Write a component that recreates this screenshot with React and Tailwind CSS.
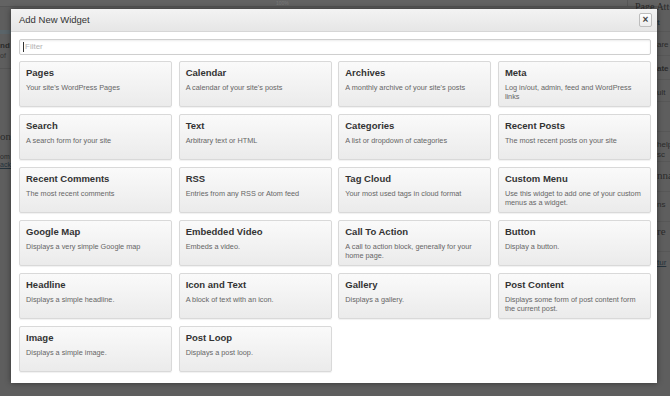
import React from "react";

const widgets = [
  { title: "Pages", desc: "Your site's WordPress Pages" },
  { title: "Calendar", desc: "A calendar of your site's posts" },
  { title: "Archives", desc: "A monthly archive of your site's posts" },
  { title: "Meta", desc: "Log in/out, admin, feed and WordPress links" },
  { title: "Search", desc: "A search form for your site" },
  { title: "Text", desc: "Arbitrary text or HTML" },
  { title: "Categories", desc: "A list or dropdown of categories" },
  { title: "Recent Posts", desc: "The most recent posts on your site" },
  { title: "Recent Comments", desc: "The most recent comments" },
  { title: "RSS", desc: "Entries from any RSS or Atom feed" },
  { title: "Tag Cloud", desc: "Your most used tags in cloud format" },
  { title: "Custom Menu", desc: "Use this widget to add one of your custom menus as a widget." },
  { title: "Google Map", desc: "Displays a very simple Google map" },
  { title: "Embedded Video", desc: "Embeds a video." },
  { title: "Call To Action", desc: "A call to action block, generally for your home page." },
  { title: "Button", desc: "Display a button." },
  { title: "Headline", desc: "Displays a simple headline." },
  { title: "Icon and Text", desc: "A block of text with an icon." },
  { title: "Gallery", desc: "Displays a gallery." },
  { title: "Post Content", desc: "Displays some form of post content form the current post." },
  { title: "Image", desc: "Displays a simple image." },
  { title: "Post Loop", desc: "Displays a post loop." },
];

const WidgetCard = ({ title, desc }) => (
  <div className="h-[46px] cursor-pointer rounded-[2px] border border-[#d9d9d9] bg-gradient-to-b from-[#fafafa] to-[#ebebeb] px-[6px] pt-[5px] shadow-[0_1px_1px_rgba(0,0,0,0.06)]">
    <h3 className="text-[9.5px] font-bold leading-[12px] text-[#333]">{title}</h3>
    <p className="mt-[5px] text-[7.3px] leading-[8.5px] text-[#666]">{desc}</p>
  </div>
);

const Backdrop = () => (
  <div className="absolute inset-0 bg-[#5e5e5e] text-[#2b2b2b]">
    {/* top strip */}
    <div className="flex h-[7px] border-b border-[#555] bg-[#636363]">
      <div className="w-[628px] border-r border-[#575757]">
        <span className="ml-[276px] block text-[5px] leading-[6px] text-[#7a7a7a]">100%</span>
      </div>
      <div className="pl-[7px] text-[10px] leading-[14px] [font-family:'Liberation_Serif',serif]">Page Att</div>
    </div>
    {/* left strip */}
    <div className="absolute left-0 top-[30px] w-[11px] overflow-hidden">
      <div className="h-[4px] bg-[#5a6469]" />
      <div className="mt-[7px] text-[8px] font-bold leading-[10px]">nd</div>
      <div className="text-[7px] leading-[9px] text-[#333]">of</div>
      <div className="mt-[8px] h-px bg-[#555]" />
      <div className="mt-[60px] text-[11px] leading-[14px] [font-family:'Liberation_Serif',serif]">on</div>
      <div className="mt-[10px] text-[7px] leading-[8px]">om</div>
      <div className="text-[7px] leading-[8px] text-[#25333d] underline">ack</div>
    </div>
    {/* right strip */}
    <div className="absolute right-0 top-[18px] w-[13px] overflow-hidden text-[8px] leading-[10px]">
      <div className="h-[14px] border-b border-[#575757] font-bold text-[#2a3a44]">t</div>
      <div className="h-[24px] border-b border-[#575757] pt-[8px]">are</div>
      <div className="h-[24px] border-b border-[#575757] pt-[8px] font-bold">ate</div>
      <div className="h-[22px] border-b border-[#575757] pt-[8px]">ult</div>
      <div className="h-[30px] border-b border-[#575757]" />
      <div className="h-[30px] border-b border-[#575757] pt-[8px]">help<br />sc</div>
      <div className="h-[30px] border-b border-[#575757] pt-[8px] text-[11px] [font-family:'Liberation_Serif',serif]">nna</div>
      <div className="h-[30px] border-b border-[#575757] pt-[8px]">ns</div>
      <div className="h-[30px] border-b border-[#575757] pt-[4px] text-[11px] [font-family:'Liberation_Serif',serif]">re</div>
      <div className="pt-[6px] text-[#25333d] underline">tur</div>
    </div>
  </div>
);

const App = () => {
  return (
    <div className="relative h-[396px] w-[670px] overflow-hidden [font-family:'Liberation_Sans',Arial,sans-serif]">
      <Backdrop />
      {/* dialog */}
      <div className="absolute left-[11px] top-[9px] flex h-[374px] w-[646px] flex-col bg-white shadow-[0_0_6px_rgba(0,0,0,0.45)]">
        <div className="flex h-[23px] shrink-0 items-center justify-between border-b border-[#d6d6d6] bg-gradient-to-b from-[#f3f3f3] to-[#e6e6e6] pl-[8px] pr-[5px]">
          <h2 className="text-[9.5px] leading-none text-[#333]">Add New Widget</h2>
          <button className="flex h-[14px] w-[13px] items-center justify-center rounded-[2px] border border-[#bdbdbd] bg-gradient-to-b from-white to-[#ececec] text-[10px] font-bold leading-none text-[#444]">
            ×
          </button>
        </div>
        <div className="pl-[8px] pr-[6px] pt-[7px]">
          <div className="flex h-[16px] items-center rounded-[2px] border border-[#cfcfcf] bg-white pl-[3px] shadow-[inset_0_1px_2px_rgba(0,0,0,0.08)]">
            <span className="mr-px h-[10px] w-px bg-[#333]" />
            <span className="text-[8px] text-[#b3b3b3]">Filter</span>
          </div>
          <div className="mt-[6px] grid grid-cols-4 gap-x-[6.5px] gap-y-[7px]">
            {widgets.map((w) => (
              <WidgetCard key={w.title} title={w.title} desc={w.desc} />
            ))}
          </div>
        </div>
      </div>
    </div>
  );
};

export default App;
